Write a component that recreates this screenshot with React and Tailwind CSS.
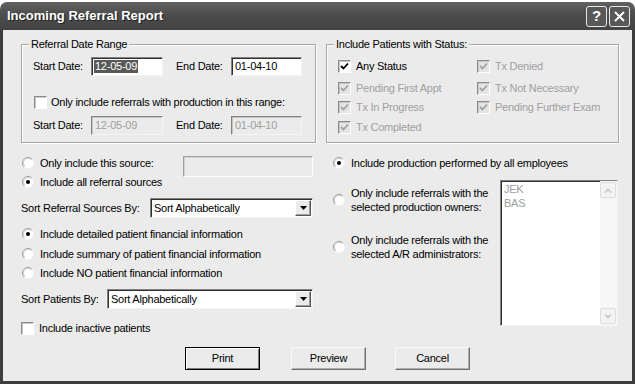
import React from 'react';

const ui = "font-['Liberation_Sans',Arial,sans-serif] text-[11px] tracking-[-0.25px] text-black";

const Check = ({ checked, disabled }) => (
  <span
    className={`w-[13px] h-[13px] shrink-0 flex items-center justify-center border border-[#8a8a8a] border-r-white border-b-white shadow-[inset_1px_1px_0_#c8c8c8] ${
      disabled ? 'bg-[#e4e4e4]' : 'bg-white'
    }`}
  >
    {checked && (
      <svg width="9" height="9" viewBox="0 0 9 9">
        <path d="M1 4 L3.5 6.5 L8 1.5" fill="none" stroke={disabled ? '#a2a2a2' : '#000'} strokeWidth="1.8" />
      </svg>
    )}
  </span>
);

const Radio = ({ checked }) => (
  <svg width="12" height="12" viewBox="0 0 12 12" className="shrink-0">
    <circle cx="6" cy="6" r="5.5" fill="#fff" />
    <path d="M2.1 9.9 A5.5 5.5 0 0 1 9.9 2.1" fill="none" stroke="#9c9c9c" strokeWidth="1" />
    <path d="M2.8 9.2 A4.5 4.5 0 0 1 9.2 2.8" fill="none" stroke="#d0d0d0" strokeWidth="1" />
    {checked && <circle cx="6" cy="6" r="2" fill="#000" />}
  </svg>
);

const TextBox = ({ value, disabled, selected, className = '' }) => (
  <div
    className={`h-[19px] border border-[#828282] border-r-[#f4f4f4] border-b-[#f4f4f4] shadow-[inset_1px_1px_0_#303030] flex items-center pl-[2px] ${
      disabled ? 'bg-[#ebebeb] text-[#a0a0a0] shadow-[inset_1px_1px_0_#c4c4c4]' : 'bg-white'
    } ${className}`}
  >
    {selected ? <span className="bg-[#595959] text-white px-[1px] leading-[13px]">{value}</span> : <span className="pl-[1px]">{value}</span>}
  </div>
);

const Select = ({ value, className = '' }) => (
  <div className={`h-[20px] bg-white border border-[#828282] border-r-[#f4f4f4] border-b-[#f4f4f4] shadow-[inset_1px_1px_0_#303030] flex items-center pl-[3px] pr-[1px] ${className}`}>
    <span className="flex-1">{value}</span>
    <span className="w-[16px] h-[16px] bg-[#ebebeb] border border-white border-r-[#555] border-b-[#555] shadow-[inset_-1px_-1px_0_#a0a0a0] flex items-center justify-center">
      <svg width="7" height="4" viewBox="0 0 7 4">
        <path d="M0 0 H7 L3.5 4 Z" fill="#000" />
      </svg>
    </span>
  </div>
);

const Button = ({ label, isDefault }) => (
  <div
    className={`w-[75px] h-[23px] bg-[#ebebeb] flex items-center justify-center ${
      isDefault
        ? 'border border-black shadow-[inset_1px_1px_0_#fff,inset_-1px_-1px_0_#7a7a7a]'
        : 'border border-[#fafafa] border-r-[#6e6e6e] border-b-[#6e6e6e] shadow-[inset_-1px_-1px_0_#b0b0b0]'
    }`}
  >
    {label}
  </div>
);

const Group = ({ title, className = '', children }) => (
  <div className={`border border-[#a6a6a6] shadow-[1px_1px_0_#fff,inset_1px_1px_0_#fff] ${className}`}>
    <div className="-mt-[7px] ml-[7px] px-[2px] w-fit h-[13px] leading-[13px] bg-[#ebebeb]">{title}</div>
    {children}
  </div>
);

const StatusItem = ({ label, checked, disabled }) => (
  <div className="flex items-center gap-[5px] h-[13px]">
    <Check checked={checked} disabled={disabled} />
    <span className={disabled ? 'text-[#a0a0a0]' : ''}>{label}</span>
  </div>
);

const RadioRow = ({ label, checked, className = '' }) => (
  <div className={`flex items-center gap-[6px] h-[14px] ${className}`}>
    <Radio checked={checked} />
    <span>{label}</span>
  </div>
);

const ScrollArrow = ({ up }) => (
  <div className="w-[16px] h-[16px] rounded-[2px] border border-[#dedede] bg-[#f3f3f3] flex items-center justify-center">
    <svg width="8" height="5" viewBox="0 0 8 5">
      <path d={up ? 'M1 4.5 L4 1.5 L7 4.5' : 'M1 0.5 L4 3.5 L7 0.5'} fill="none" stroke="#c4c4c4" strokeWidth="1.6" />
    </svg>
  </div>
);

export default function App() {
  return (
    <div className={`w-[635px] h-[384px] bg-white overflow-hidden ${ui}`}>
      <div className="mt-[2px] h-[382px] flex flex-col rounded-t-[7px] overflow-hidden">
        {/* title bar */}
        <div className="h-[28px] shrink-0 bg-gradient-to-b from-[#616161] via-[#4b4b4b] to-[#444] flex items-center pl-[7px] pr-[5px]">
          <span className="font-['Liberation_Sans',Arial,sans-serif] font-bold text-[13px] tracking-normal text-white [text-shadow:1px_1px_0_#222] flex-1">
            Incoming Referral Report
          </span>
          <div className="flex gap-[2px]">
            <div className="w-[21px] h-[21px] rounded-[3px] border border-[#e8e8e8] bg-[#585858] flex items-center justify-center text-white font-bold text-[15px] font-['Liberation_Sans',Arial,sans-serif] tracking-normal">
              ?
            </div>
            <div className="w-[21px] h-[21px] rounded-[3px] border border-[#e8e8e8] bg-[#585858] flex items-center justify-center">
              <svg width="11" height="11" viewBox="0 0 11 11">
                <path d="M1 1 L10 10 M10 1 L1 10" stroke="#fff" strokeWidth="2" />
              </svg>
            </div>
          </div>
        </div>

        {/* body */}
        <div className="flex-1 bg-[#ebebeb] border-x-[3px] border-b-[3px] border-[#3d3d3d] pl-[18px] pr-[13px]">
          {/* groups */}
          <div className="flex gap-[10px] mt-[14px]">
            <Group title="Referral Date Range" className="w-[295px] h-[99px]">
              <div className="flex items-center mt-[6px] pl-[11px]">
                <span className="w-[58px]">Start Date:</span>
                <TextBox value="12-05-09" selected className="w-[72px]" />
                <span className="ml-[13px] w-[55px]">End Date:</span>
                <TextBox value="01-04-10" className="w-[71px]" />
              </div>
              <div className="flex items-center gap-[4px] mt-[18px] pl-[12px]">
                <Check />
                <span>Only include referrals with production in this range:</span>
              </div>
              <div className="flex items-center mt-[5px] pl-[11px]">
                <span className="w-[58px]">Start Date:</span>
                <TextBox value="12-05-09" disabled className="w-[72px]" />
                <span className="ml-[13px] w-[55px]">End Date:</span>
                <TextBox value="01-04-10" disabled className="w-[71px]" />
              </div>
            </Group>

            <Group title="Include Patients with Status:" className="w-[293px] h-[99px]">
              <div className="grid grid-cols-[139px_1fr] pl-[11px] mt-[9px]">
                <StatusItem label="Any Status" checked />
                <StatusItem label="Tx Denied" checked disabled />
                <div className="mt-[9px]"><StatusItem label="Pending First Appt" checked disabled /></div>
                <div className="mt-[9px]"><StatusItem label="Tx Not Necessary" checked disabled /></div>
                <div className="mt-[6px]"><StatusItem label="Tx In Progress" checked disabled /></div>
                <div className="mt-[6px]"><StatusItem label="Pending Further Exam" checked disabled /></div>
                <div className="mt-[7px]"><StatusItem label="Tx Completed" checked disabled /></div>
              </div>
            </Group>
          </div>

          {/* options */}
          <div className="flex gap-[10px] h-[192px]">
            <div className="w-[295px]">
              <div className="flex justify-between mt-[13px] pr-[3px]">
                <div className="flex flex-col pl-[1px]">
                  <RadioRow label="Only include this source:" />
                  <RadioRow label="Include all referral sources" checked className="mt-[5px]" />
                </div>
                <div className="w-[130px] h-[21px] bg-[#ebebeb] border border-[#a0a0a0] border-r-white border-b-white shadow-[inset_1px_1px_0_#d4d4d4]" />
              </div>
              <div className="flex items-center justify-between mt-[9px] pr-[3px]">
                <span>Sort Referral Sources By:</span>
                <Select value="Sort Alphabetically" className="w-[163px]" />
              </div>
              <div className="pl-[1px]">
                <RadioRow label="Include detailed patient financial information" checked className="mt-[9px]" />
                <RadioRow label="Include summary of patient financial information" className="mt-[6px]" />
                <RadioRow label="Include NO patient financial information" className="mt-[5px]" />
              </div>
              <div className="flex items-center justify-between mt-[9px] pr-[3px]">
                <span>Sort Patients By:</span>
                <Select value="Sort Alphabetically" className="w-[206px]" />
              </div>
              <div className="flex items-center gap-[5px] mt-[13px] h-[13px]">
                <Check />
                <span>Include inactive patients</span>
              </div>
            </div>

            <div className="w-[293px]">
              <RadioRow label="Include production performed by all employees" checked className="mt-[13px] pl-[7px]" />
              <div className="flex justify-between mt-[10px] pr-[1px]">
                <div className="flex flex-col pl-[7px] leading-[14px]">
                  <div className="flex items-center gap-[6px] mt-[6px]">
                    <Radio />
                    <span>
                      Only include referrals with the
                      <br />
                      selected production owners:
                    </span>
                  </div>
                  <div className="flex items-center gap-[6px] mt-[19px]">
                    <Radio />
                    <span>
                      Only include referrals with the
                      <br />
                      selected A/R administrators:
                    </span>
                  </div>
                </div>
                <div className="w-[118px] h-[146px] bg-white border border-[#828282] border-r-[#f4f4f4] border-b-[#f4f4f4] shadow-[inset_1px_1px_0_#303030] flex">
                  <div className="flex-1 pl-[3px] pt-[1px] text-[#a0a0a0] leading-[14px]">
                    <div>JEK</div>
                    <div>BAS</div>
                  </div>
                  <div className="w-[17px] bg-[#f6f6f6] flex flex-col justify-between py-[1px]">
                    <ScrollArrow up />
                    <ScrollArrow />
                  </div>
                </div>
              </div>
            </div>
          </div>

          {/* buttons */}
          <div className="flex mt-[12px] pl-[164px]">
            <Button label="Print" isDefault />
            <div className="ml-[31px]"><Button label="Preview" /></div>
            <div className="ml-[29px]"><Button label="Cancel" /></div>
          </div>
        </div>
      </div>
    </div>
  );
}
